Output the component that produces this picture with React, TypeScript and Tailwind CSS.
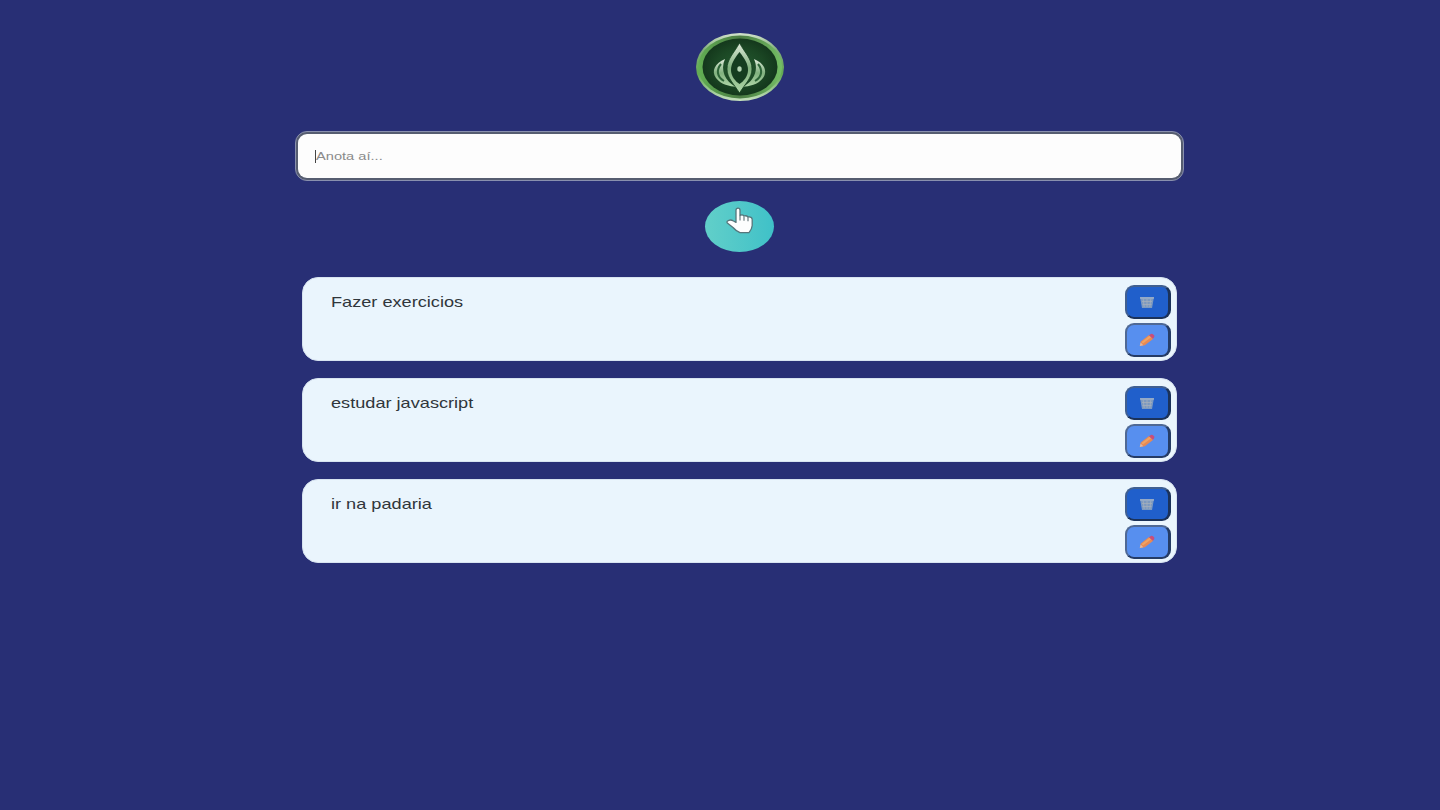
import React from "react";

const tasks = ["Fazer exercicios", "estudar javascript", "ir na padaria"];

function Logo() {
  return (
    <svg width="88" height="68" viewBox="0 0 88 68" className="ml-px block">
      <defs>
        <linearGradient id="rim" x1="0" y1="0" x2="0" y2="1">
          <stop offset="0" stopColor="#d3e3cd" />
          <stop offset="0.25" stopColor="#7fae78" />
          <stop offset="0.6" stopColor="#62a953" />
          <stop offset="1" stopColor="#c4dfbd" />
        </linearGradient>
        <linearGradient id="rimInner" x1="0" y1="0" x2="1" y2="0">
          <stop offset="0" stopColor="#62b053" />
          <stop offset="0.5" stopColor="#4a7b43" />
          <stop offset="1" stopColor="#74bf64" />
        </linearGradient>
        <radialGradient id="core">
          <stop offset="0" stopColor="#245a30" />
          <stop offset="0.65" stopColor="#1b4724" />
          <stop offset="1" stopColor="#14381c" />
        </radialGradient>
        <linearGradient id="petal" x1="0" y1="0" x2="0" y2="1">
          <stop offset="0" stopColor="#dfeadb" />
          <stop offset="0.5" stopColor="#80b17e" />
          <stop offset="1" stopColor="#b0d6a8" />
        </linearGradient>
      </defs>
      <ellipse cx="44" cy="34" rx="44" ry="34" fill="url(#rim)" />
      <ellipse cx="44" cy="34" rx="42" ry="31.5" fill="url(#rimInner)" />
      <ellipse cx="44" cy="34" rx="37.5" ry="28.5" fill="url(#core)" />
      <path d="M29 26C19 30 15 38 20 45C25 52 34 53 40 54C29 48 24 37 29 26Z" fill="url(#petal)" />
      <path d="M58 26C68 30 72 38 67 45C62 52 53 53 47 54C58 48 63 37 58 26Z" fill="url(#petal)" />
      <path d="M25 31C20 37 21 44 28 48M62 31C67 37 66 44 59 48" fill="none" stroke="#2d6538" strokeWidth="2" />
      <path d="M43.5 10C38 20 31 26 31 36C31 45 38 51 43.5 60C49 51 56 45 56 36C56 26 49 20 43.5 10Z" fill="url(#petal)" stroke="#17431f" strokeWidth="0.8" />
      <path d="M43.5 19C38 26 35 31 35 37C35 43 39 48 43.5 51C48 48 52 43 52 37C52 31 49 26 43.5 19Z" fill="#153d20" />
      <ellipse cx="43.5" cy="36" rx="2.2" ry="2.7" fill="#b4d4b3" />
    </svg>
  );
}

function TrashIcon() {
  return (
    <svg width="16" height="13" viewBox="0 0 16 13" className="mt-px">
      <path d="M1 1L3 12H13L15 1Z" fill="#7c99c0" />
      <path d="M4.2 3L5.2 11M8 3V11M11.8 3L10.8 11M3 5.5H13M3.5 8.5H12.5" stroke="#a4aebb" strokeWidth="0.8" />
      <path d="M1 1H15L14.7 3H1.3Z" fill="#93a9c7" />
    </svg>
  );
}

function PencilIcon() {
  return (
    <svg width="16" height="14" viewBox="0 0 16 14">
      <path d="M0.8 13L1.8 8.5L10 2L14.3 5.8L5.8 12.2Z" fill="#e88953" />
      <path d="M2.5 8.9L10.6 2.8L12.2 4.2L4 10.4Z" fill="#f0a363" />
      <path d="M10 2.2L11.8 1Q13.2 .4 14.3 1.5L15.2 2.6Q15.8 3.7 14.8 4.8L13.8 5.8Z" fill="#c94e7a" />
      <path d="M0.8 13L1.6 9.6L4.3 12.3Z" fill="#dfb8a4" />
    </svg>
  );
}

function HandCursor() {
  return (
    <svg width="28" height="28" viewBox="0 0 28 28" className="mt-[6px] ml-0.5 block">
      <path
        d="M10 3.2Q10 1.2 12 1.2Q14 1.2 14 3.2V8.5Q16.5 7.2 18 9Q20.5 8.2 22 10Q26 9.4 26.2 12.5V18.5Q26 22 23 25.6H14Q10 24 7 20.5L1.3 16Q.2 14.2 2.7 13.3Q5 12.4 7.5 14L10 15.4Z"
        fill="#fdfefe"
        stroke="#56767b"
        strokeWidth="1.3"
        strokeLinejoin="round"
      />
      <path d="M14 8.5V13.5M18 9.5V13.8M22 10.3V14.2" stroke="#6a7b7f" strokeWidth="1.2" />
    </svg>
  );
}

function Task({ text }: { text: string }) {
  return (
    <li className="flex h-[84px] w-[875px] justify-between rounded-[16px] border border-[#d7e3f0] bg-[#eaf5fd] pt-[7px] pr-[5px] pl-7">
      <span className="mt-[7px] block h-5 origin-left scale-x-[1.21] text-[15px] leading-5 whitespace-nowrap text-[#30363b]">{text}</span>
      <div className="flex flex-col gap-1">
        <button aria-label="Excluir" className="flex h-[34px] w-[46px] items-center justify-center rounded-[9px] border-2 border-r-3 border-t-[#405f91] border-r-[#1b325a] border-b-[#1b325a] border-l-[#405f91] bg-[#205fcb]">
          <TrashIcon />
        </button>
        <button aria-label="Editar" className="flex h-[34px] w-[46px] items-center justify-center rounded-[9px] border-2 border-r-3 border-t-[#4f6995] border-r-[#253c66] border-b-[#253c66] border-l-[#4f6995] bg-[#578fef]">
          <PencilIcon />
        </button>
      </div>
    </li>
  );
}

export default function App() {
  return (
    <div className="flex min-h-screen justify-center bg-[#282f75] pl-[38px] font-['Liberation_Sans',Arial,sans-serif]">
      <main className="flex w-[889px] flex-col items-center pt-[33px]">
        <Logo />
        <div className="mt-[30px] h-[50px] w-full rounded-[12px] border border-[#8990ae] bg-[#565d70] p-[2px]">
          <div className="flex h-full items-center rounded-[9px] bg-[#fdfdfd] pl-[17px]">
            <span className="h-[13px] w-px bg-[#444444]" />
            <span className="origin-left scale-x-[1.33] text-[11px] leading-4 text-[#8b8b8b]">Anota aí...</span>
          </div>
        </div>
        <button aria-label="Adicionar" className="mt-5 flex h-[51px] w-[69px] justify-center rounded-[50%] bg-linear-to-r from-[#61cfc9] to-[#3fc1c8]">
          <HandCursor />
        </button>
        <ul className="mt-[25px] flex flex-col gap-[17px]">
          {tasks.map((task) => (
            <Task key={task} text={task} />
          ))}
        </ul>
      </main>
    </div>
  );
}
